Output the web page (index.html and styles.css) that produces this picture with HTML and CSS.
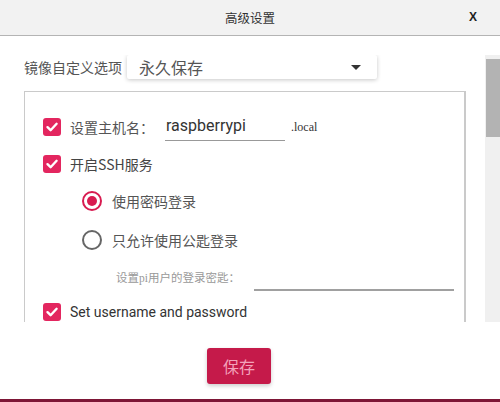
FILE: index.html
```html
<!DOCTYPE html>
<html>
<head>
<meta charset="utf-8">
<link rel="stylesheet" href="styles.css">
</head>
<body>
<div class="dialog">
  <div class="header">
    <span class="title">高级设置</span>
    <span class="close">X</span>
  </div>
  <div class="body">
    <div class="scroll">
      <div class="preset">
        <span class="preset-label">镜像自定义选项</span>
        <div class="select">
          <span>永久保存</span>
          <span class="arrow"></span>
        </div>
      </div>
      <div class="box">
        <div class="row row-host">
          <span class="check"><svg viewBox="0 0 18 18" width="18" height="18"><path d="M4.5 9.2 L7.6 12.2 L13.6 5.8" fill="none" stroke="#fff" stroke-width="2.4" stroke-linecap="round" stroke-linejoin="round"/></svg></span>
          <span class="label">设置主机名：</span>
          <span class="input host">raspberrypi</span>
          <span class="suffix">.local</span>
        </div>
        <div class="row row-ssh">
          <span class="check"><svg viewBox="0 0 18 18" width="18" height="18"><path d="M4.5 9.2 L7.6 12.2 L13.6 5.8" fill="none" stroke="#fff" stroke-width="2.4" stroke-linecap="round" stroke-linejoin="round"/></svg></span>
          <span class="label dark">开启SSH服务</span>
        </div>
        <div class="row radio-row r1">
          <span class="radio on"></span>
          <span class="label">使用密码登录</span>
        </div>
        <div class="row radio-row r2">
          <span class="radio"></span>
          <span class="label">只允许使用公匙登录</span>
        </div>
        <div class="row pwd-row">
          <span class="pwd-label">设置pi用户的登录密匙：</span>
          <span class="input pwd"></span>
        </div>
        <div class="row row-user">
          <span class="check"><svg viewBox="0 0 18 18" width="18" height="18"><path d="M4.5 9.2 L7.6 12.2 L13.6 5.8" fill="none" stroke="#fff" stroke-width="2.4" stroke-linecap="round" stroke-linejoin="round"/></svg></span>
          <span class="label latin">Set username and password</span>
        </div>
      </div>
    </div>
    <div class="scrollbar"><div class="thumb"></div></div>
  </div>
  <div class="footer">
    <button class="save">保存</button>
  </div>
</div>
</body>
</html>
```
FILE: styles.css
```css
* { box-sizing: border-box; }
html, body { margin: 0; padding: 0; background: #fff; }
body { font-family: "Noto Sans CJK SC", "Noto Sans", sans-serif; }

.dialog {
  width: 500px;
  height: 402px;
  display: flex;
  flex-direction: column;
  background: #fff;
  overflow: hidden;
}

.header {
  height: 36px;
  flex: none;
  background: #f2f2f2;
  border-bottom: 1px solid #b4b4b4;
  display: flex;
  align-items: center;
  justify-content: center;
  position: relative;
}
.title { font-size: 12.5px; color: #333; }
.close {
  position: absolute;
  right: 23px;
  top: 10px;
  font-family: "Liberation Sans", Arial, sans-serif;
  font-weight: bold;
  font-size: 12px;
  color: #222;
}

.body {
  margin-top: 19px;
  height: 267px;
  flex: none;
  display: flex;
}
.scroll {
  flex: 1;
  overflow: hidden;
  padding-left: 24px;
}
.scrollbar {
  width: 15px;
  flex: none;
  background: #f0f0f0;
  padding: 4px 0 0 1px;
}
.thumb { height: 78px; background: #b3b3b3; }

.preset {
  display: flex;
  align-items: center;
  height: 24px;
}
.preset-label { font-size: 14px; color: #555; width: 103px; flex: none; white-space: nowrap; }
.select {
  width: 250px;
  height: 24px;
  background: #fff;
  box-shadow: 0 1px 4px rgba(0,0,0,0.22);
  border-radius: 2px;
  display: flex;
  align-items: center;
  justify-content: space-between;
  padding: 0 16px 0 12px;
  font-size: 16px;
  color: #555;
}
.arrow {
  width: 0; height: 0;
  border-left: 5px solid transparent;
  border-right: 5px solid transparent;
  border-top: 5px solid #333;
}

.box {
  margin-top: 12px;
  width: 442px;
  height: 260px;
  border: 1px solid #cacaca;
  border-right-width: 2px;
  padding: 21px 0 0 18px;
}
.row { display: flex; align-items: center; height: 28px; }
.check {
  width: 18px; height: 18px;
  border-radius: 3px;
  background: #e3265f;
  flex: none;
  display: flex;
}
.label { font-size: 14px; color: #555; margin-left: 9px; white-space: nowrap; }
.label.dark { color: #444; }
.label.latin { font-family: Roboto, "Noto Sans", sans-serif; font-size: 14px; color: #333; }

.input {
  display: block;
  border-bottom: 1px solid #999;
  height: 28px;
  flex: none;
}
.host {
  margin-left: 11px;
  width: 120px;
  font-family: Roboto, sans-serif;
  font-size: 16px;
  color: #333;
  line-height: 26px;
  padding-left: 1px;
}
.suffix {
  font-family: "Liberation Serif", serif;
  font-size: 12px;
  color: #333;
  margin-left: 6px;
}

.row-ssh { margin-top: 9px; }
.radio-row { padding-left: 39px; }
.r1 { margin-top: 9px; }
.r2 { margin-top: 11px; }
.radio-row .label { margin-left: 10px; }
.radio {
  width: 20px; height: 20px;
  border-radius: 50%;
  border: 2px solid #666;
  flex: none;
  display: flex;
  align-items: center;
  justify-content: center;
}
.radio.on { border-color: #d81b50; }
.radio.on::after {
  content: "";
  width: 10px; height: 10px;
  border-radius: 50%;
  background: #d81b50;
}

.pwd-row { margin-top: 8px; padding-left: 73px; height: 29px; }
.pwd-label {
  font-family: "Liberation Serif", "Noto Sans CJK SC", serif;
  font-size: 11.5px;
  color: #999;
  width: 138px;
  min-width: 0;
  flex: none;
  white-space: nowrap;
}
.pwd { width: 200px; border-bottom: 2px solid #a0a0a0; height: 29px; }

.row-user { margin-top: 7px; }

.footer {
  flex: 1;
  display: flex;
  justify-content: center;
  align-items: flex-start;
  padding: 26px 22px 0 0;
  border-bottom: 3px solid #7d1636;
}
.save {
  width: 64px;
  height: 36px;
  border: none;
  border-radius: 3px;
  background: #c51a4a;
  color: #f3a2ba;
  font-family: "Noto Sans CJK SC", sans-serif;
  font-size: 16px;
  box-shadow: 0 2px 4px rgba(0,0,0,0.2);
  padding: 0;
}
```
